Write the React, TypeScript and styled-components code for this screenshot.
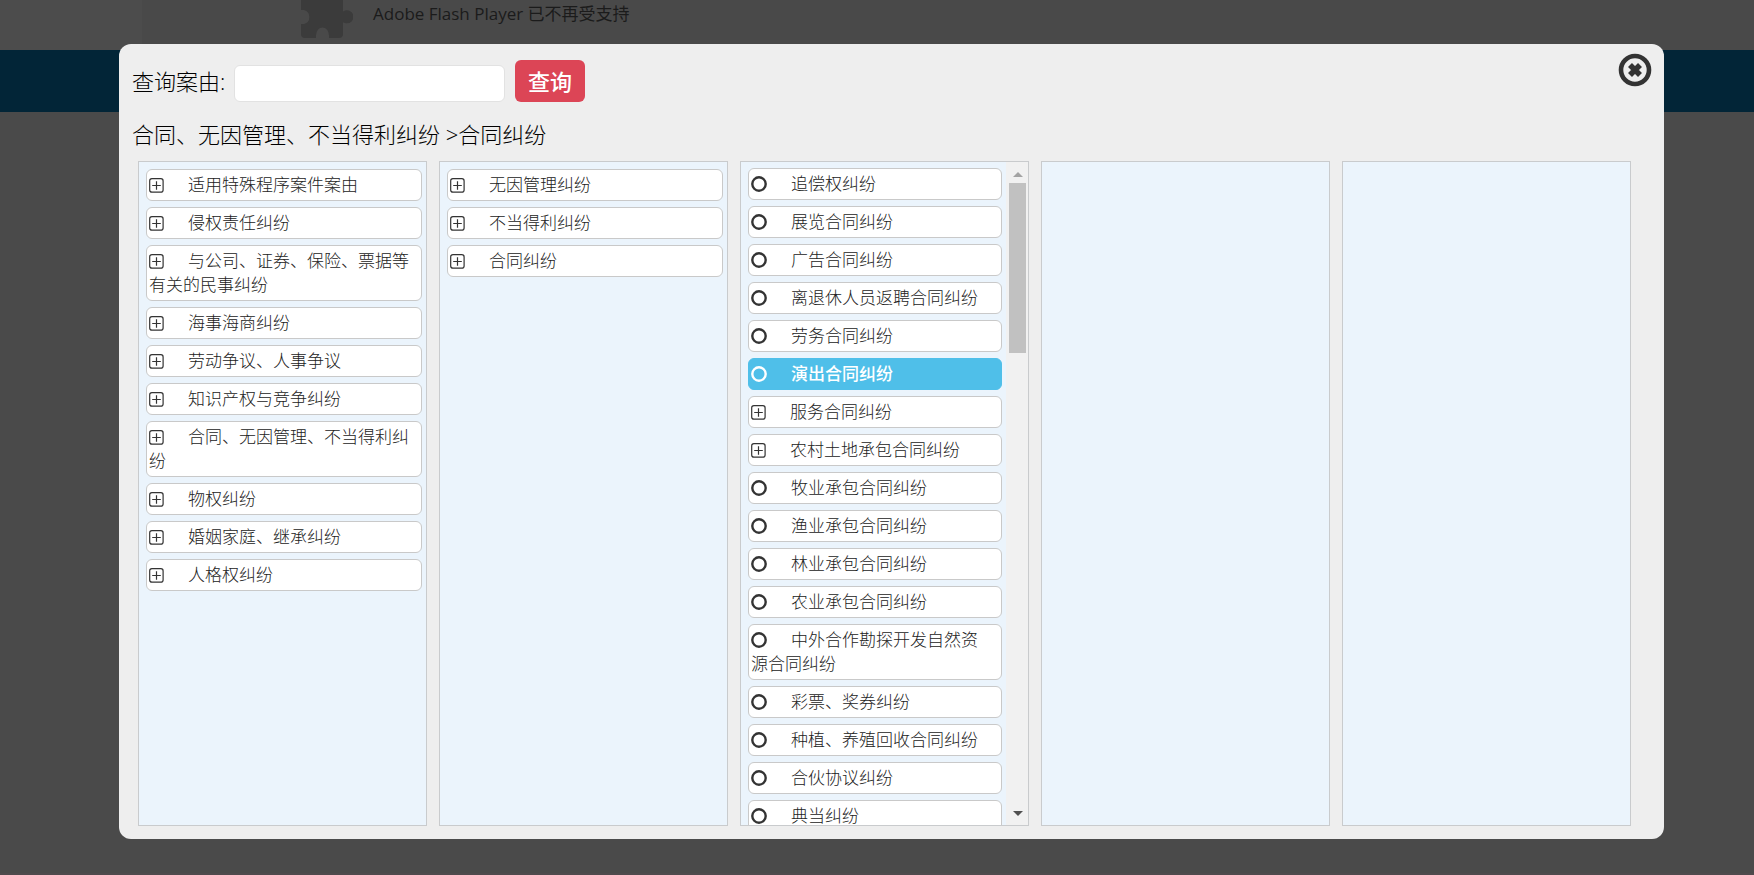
import React, { useRef, useState } from "react";
import styled, { createGlobalStyle } from "styled-components";

const GlobalStyle = createGlobalStyle`
  *, *::before, *::after { box-sizing: border-box; }
  body {
    margin: 0;
    background: #4a4a4a;
    color: #000;
    font-family: "Open Sans", "Noto Sans CJK SC", sans-serif;
    font-weight: 300;
  }
  ul { list-style: none; margin: 0; padding: 0; }
  button, input { font: inherit; color: inherit; }
`;

const Page = styled.div`
  display: flex;
  flex-direction: column;
  height: 100vh;
  overflow: hidden;
`;

const PluginNotice = styled.div`
  flex: none;
  display: flex;
  justify-content: flex-start;
  gap: 20px;
  height: 50px;
  margin-left: 142px;
  padding-left: 159px;
  background: #494949;
  box-shadow: -142px 0 0 #4c4c4c;
  color: #1b1b1b;
  font-size: 17px;
  font-weight: 400;
  line-height: 28px;
`;

const NavBand = styled.div`
  flex: none;
  height: 62px;
  background: #022537;
`;

const PageFoot = styled.div`
  height: 2px;
  margin-top: auto;
  background: #4f4a4c;
`;

const Overlay = styled.div`
  position: fixed;
  inset: 0;
  display: flex;
  padding: 44px 90px 36px 119px;
`;

const Dialog = styled.section`
  position: relative;
  flex: 1;
  min-width: 0;
  display: flex;
  flex-direction: column;
  padding: 16px 33px 13px 19px;
  border-radius: 12px;
  background: #eee;
`;

const CloseButton = styled.button`
  position: absolute;
  top: 9px;
  right: 12px;
  width: 34px;
  height: 34px;
  padding: 0;
  border: 0;
  background: none;
  color: #333;
  cursor: pointer;

  svg { display: block; }
`;

const SearchForm = styled.form`
  display: flex;
  align-items: flex-end;
  margin-left: -6px;
  font-size: 22px;
`;

const SearchLabel = styled.label`
  width: 102px;
  line-height: 42px;
`;

const SearchInput = styled.input`
  width: 271px;
  height: 37px;
  margin-right: 10px;
  padding: 0 8px;
  border: 1px solid #e2e2e2;
  border-radius: 6px;
  background: #fff;
  outline: none;
`;

const SearchButton = styled.button`
  width: 70px;
  height: 42px;
  padding: 0;
  border: 0;
  border-radius: 6px;
  background: #dc4556;
  color: #fff;
  font-weight: 500;
  line-height: 42px;
  cursor: pointer;
`;

const Trail = styled.h1`
  margin: 15px 0 10px -6px;
  font-size: 22px;
  font-weight: 300;
  line-height: 34px;
`;

const Columns = styled.div`
  flex: 1;
  min-height: 0;
  display: grid;
  grid-template-columns: repeat(5, minmax(0, 1fr));
  gap: 12px;
`;

const Column = styled.div`
  display: flex;
  min-height: 0;
  border: 1px solid #c9cbcd;
  background: #ebf4fc;
`;

const List = styled.ul<{ $compact?: boolean }>`
  flex: 1;
  min-width: 0;
  padding: ${(p) => (p.$compact ? 6 : 7)}px 4px 0 7px;
  overflow-y: auto;
  scrollbar-width: none;
`;

const Entry = styled.li`
  margin-bottom: 6px;
`;

const EntryButton = styled.button<{ $selected: boolean }>`
  display: block;
  width: 100%;
  padding: 3px 8px 3px 2px;
  border: 1px solid ${(p) => (p.$selected ? "#4fbfe9" : "#c9c9c9")};
  border-radius: 6px;
  background: ${(p) => (p.$selected ? "#4fbfe9" : "#fff")};
  color: ${(p) => (p.$selected ? "#fff" : "#222")};
  font-size: 17px;
  font-weight: ${(p) => (p.$selected ? 500 : 300)};
  line-height: 24px;
  text-align: left;
  cursor: pointer;

  svg {
    margin-right: 24px;
    stroke: ${(p) => (p.$selected ? "#fff" : "#333")};
    vertical-align: -2px;
  }
`;

const ScrollRail = styled.div`
  flex: none;
  display: flex;
  flex-direction: column;
  width: 22px;
  padding: 3px 2px 3px 3px;
  background: #f1f1f1;
`;

const ScrollArrow = styled.button`
  flex: none;
  display: flex;
  justify-content: center;
  align-items: center;
  height: 18px;
  padding: 0;
  border: 0;
  background: none;
  color: #505050;

  &:disabled { color: #a3a3a3; }
`;

const ScrollTrack = styled.div`
  flex: 1;
  overflow: hidden;
`;

const ScrollThumb = styled.div`
  height: 170px;
  background: #c1c1c1;
`;

function PlusIcon() {
  return (
    <svg width="15" height="15" viewBox="0 0 15 15" fill="none" aria-hidden="true">
      <rect x="0.7" y="0.7" width="13.4" height="13.4" rx="2.2" strokeWidth="1.2" />
      <path d="M7.5 3.2v8.6M3.2 7.5h8.6" strokeWidth="1.2" />
    </svg>
  );
}

function RingIcon() {
  return (
    <svg width="16" height="16" viewBox="0 0 16 16" fill="none" aria-hidden="true">
      <circle cx="8" cy="8" r="6.7" strokeWidth="2.4" />
    </svg>
  );
}

function PuzzleIcon() {
  return (
    <svg width="52" height="38" viewBox="0 0 52 38" fill="#3b3b3b" aria-hidden="true">
      <path d="M0 0H42V11.5C43.500 10.700 44.500 10.300 46 10.300A6.500 6.500 0 0 1 46 23.300C44.500 23.300 43.500 23 42 22.300V34Q42 38 38 38H28V35.500A6.500 8 0 0 0 15 35.500V38H4Q0 38 0 34V24H3A7 7.200 0 0 0 3 10H0Z" />
    </svg>
  );
}

type Cause = { name: string; leaf?: boolean };

const branch = (...names: string[]): Cause[] => names.map((name) => ({ name }));
const leaves = (...names: string[]): Cause[] => names.map((name) => ({ name, leaf: true }));

const topCauses = branch(
  "适用特殊程序案件案由",
  "侵权责任纠纷",
  "与公司、证券、保险、票据等有关的民事纠纷",
  "海事海商纠纷",
  "劳动争议、人事争议",
  "知识产权与竞争纠纷",
  "合同、无因管理、不当得利纠纷",
  "物权纠纷",
  "婚姻家庭、继承纠纷",
  "人格权纠纷"
);

const secondCauses = branch("无因管理纠纷", "不当得利纠纷", "合同纠纷");

const contractCauses = [
  ...leaves("追偿权纠纷", "展览合同纠纷", "广告合同纠纷", "离退休人员返聘合同纠纷", "劳务合同纠纷", "演出合同纠纷"),
  ...branch("服务合同纠纷", "农村土地承包合同纠纷"),
  ...leaves(
    "牧业承包合同纠纷",
    "渔业承包合同纠纷",
    "林业承包合同纠纷",
    "农业承包合同纠纷",
    "中外合作勘探开发自然资源合同纠纷",
    "彩票、奖券纠纷",
    "种植、养殖回收合同纠纷",
    "合伙协议纠纷",
    "典当纠纷"
  ),
];

type CauseColumnProps = {
  causes: Cause[];
  selected: string;
  onSelect: (name: string) => void;
  scrollable?: boolean;
};

function CauseColumn({ causes, selected, onSelect, scrollable }: CauseColumnProps) {
  const listRef = useRef<HTMLUListElement>(null);
  const [atTop, setAtTop] = useState(true);
  const scroll = (delta: number) => listRef.current?.scrollBy({ top: delta });

  return (
    <Column>
      <List ref={listRef} $compact={scrollable} onScroll={(e) => setAtTop(e.currentTarget.scrollTop <= 0)}>
        {causes.map(({ name, leaf }) => (
          <Entry key={name}>
            <EntryButton type="button" $selected={name === selected} onClick={() => onSelect(name)}>
              {leaf ? <RingIcon /> : <PlusIcon />}
              {name}
            </EntryButton>
          </Entry>
        ))}
      </List>
      {scrollable && (
        <ScrollRail>
          <ScrollArrow type="button" aria-label="向上滚动" disabled={atTop} onClick={() => scroll(-38)}>
            <svg width="10" height="5" fill="currentColor"><path d="M0 5L5 0L10 5Z" /></svg>
          </ScrollArrow>
          <ScrollTrack>
            <ScrollThumb />
          </ScrollTrack>
          <ScrollArrow type="button" aria-label="向下滚动" onClick={() => scroll(38)}>
            <svg width="10" height="5" fill="currentColor"><path d="M0 0L5 5L10 0Z" /></svg>
          </ScrollArrow>
        </ScrollRail>
      )}
    </Column>
  );
}

export default function App() {
  const [selected, setSelected] = useState("演出合同纠纷");

  return (
    <>
      <GlobalStyle />
      <Page>
        <PluginNotice>
          <PuzzleIcon />
          <span>Adobe Flash Player 已不再受支持</span>
        </PluginNotice>
        <NavBand />
        <PageFoot />
      </Page>
      <Overlay>
        <Dialog role="dialog" aria-labelledby="cause-trail">
          <CloseButton type="button" aria-label="关闭">
            <svg width="34" height="34" viewBox="0 0 34 34" fill="none" stroke="currentColor">
              <circle cx="17" cy="17" r="14" strokeWidth="4.600" />
              <path d="M12 12L22 22M22 12L12 22" strokeWidth="5.600" />
            </svg>
          </CloseButton>
          <SearchForm onSubmit={(e) => e.preventDefault()}>
            <SearchLabel htmlFor="cause-query">查询案由:</SearchLabel>
            <SearchInput id="cause-query" type="text" />
            <SearchButton type="submit">查询</SearchButton>
          </SearchForm>
          <Trail id="cause-trail">合同、无因管理、不当得利纠纷 &gt;合同纠纷</Trail>
          <Columns>
            <CauseColumn causes={topCauses} selected={selected} onSelect={setSelected} />
            <CauseColumn causes={secondCauses} selected={selected} onSelect={setSelected} />
            <CauseColumn causes={contractCauses} selected={selected} onSelect={setSelected} scrollable />
            <Column />
            <Column />
          </Columns>
        </Dialog>
      </Overlay>
    </>
  );
}
